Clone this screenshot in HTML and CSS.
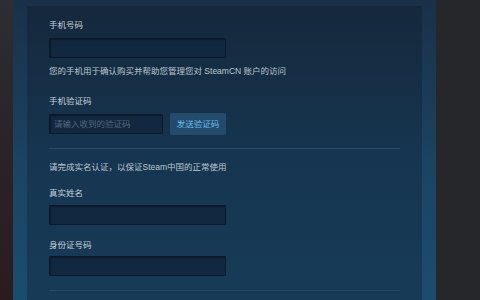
FILE: index.html
```html
<!DOCTYPE html>
<html lang="zh-CN">
<head>
<meta charset="utf-8">
<link rel="stylesheet" href="styles.css">
</head>
<body>
<div class="page">
  <div class="bg-left"></div>
  <div class="outer">
    <div class="inner">
      <div class="label l1">手机号码</div>
      <div class="field"></div>
      <div class="help">您的手机用于确认购买并帮助您管理您对 SteamCN 账户的访问</div>
      <div class="label l2">手机验证码</div>
      <div class="code-row">
        <div class="field code">请输入收到的验证码</div>
        <div class="btn">发送验证码</div>
      </div>
      <div class="sep s1"></div>
      <div class="help h2">请完成实名认证，以保证Steam中国的正常使用</div>
      <div class="label l3">真实姓名</div>
      <div class="field f3"></div>
      <div class="label l4">身份证号码</div>
      <div class="field f4"></div>
      <div class="sep s2"></div>
    </div>
  </div>
  <div class="bg-right"></div>
</div>
</body>
</html>
```

FILE: styles.css
```css
html, body {
  margin: 0;
  padding: 0;
  width: 480px;
  height: 300px;
  overflow: hidden;
  background: #25272b;
  font-family: "Liberation Sans", "Noto Sans CJK SC", sans-serif;
  font-size: 8.5px;
}
.page {
  display: flex;
  height: 300px;
}
.bg-left {
  width: 13px;
  background: linear-gradient(180deg, #2c2e33 0%, #2a2328 50%, #2b1b21 100%);
}
.outer {
  width: 395px;
  padding: 6px 14px 0 14px;
  background: linear-gradient(180deg, #1a3049 0%, #1b4565 60%, #1c4c6d 100%);
}
.inner {
  height: 294px;
  box-sizing: border-box;
  padding: 13px 22px 0 22px;
  background: linear-gradient(180deg, #15283b 0%, #163550 50%, #173b57 100%);
}
.bg-right {
  flex: 1;
  background: #25272b;
}
.label {
  line-height: 12px;
  height: 12px;
  color: #c6d0d9;
}
.l1 { margin-bottom: 7px; }
.l2 { margin-top: 18px; }
.l3 { margin-top: 14px; }
.l4 { margin-top: 14px; }
.field {
  width: 177px;
  height: 20px;
  box-sizing: border-box;
  background: #112840;
  border: 1px solid #0b1929;
  box-shadow: inset 1px 1px 1px rgba(0,0,0,0.3);
  border-radius: 1px;
}
.help {
  margin-top: 7px;
  line-height: 12px;
  height: 12px;
  color: #bcc6cf;
  white-space: nowrap;
}
.code-row {
  margin-top: 6px;
  display: flex;
  align-items: center;
  gap: 7px;
  height: 22px;
}
.code {
  width: 114px;
  color: #55677a;
  line-height: 18px;
  padding-left: 4px;
}
.btn {
  width: 56px;
  height: 22px;
  line-height: 22px;
  text-align: center;
  background: #234b6c;
  color: #6dbbe9;
  border-radius: 2px;
}
.sep {
  height: 1px;
  background: #244c6a;
}
.s1 { margin-top: 13px; }
.h2 { margin-top: 12px; }
.f3 { margin-top: 6px; }
.f4 { margin-top: 5px; }
.s2 { margin-top: 14px; }
```
